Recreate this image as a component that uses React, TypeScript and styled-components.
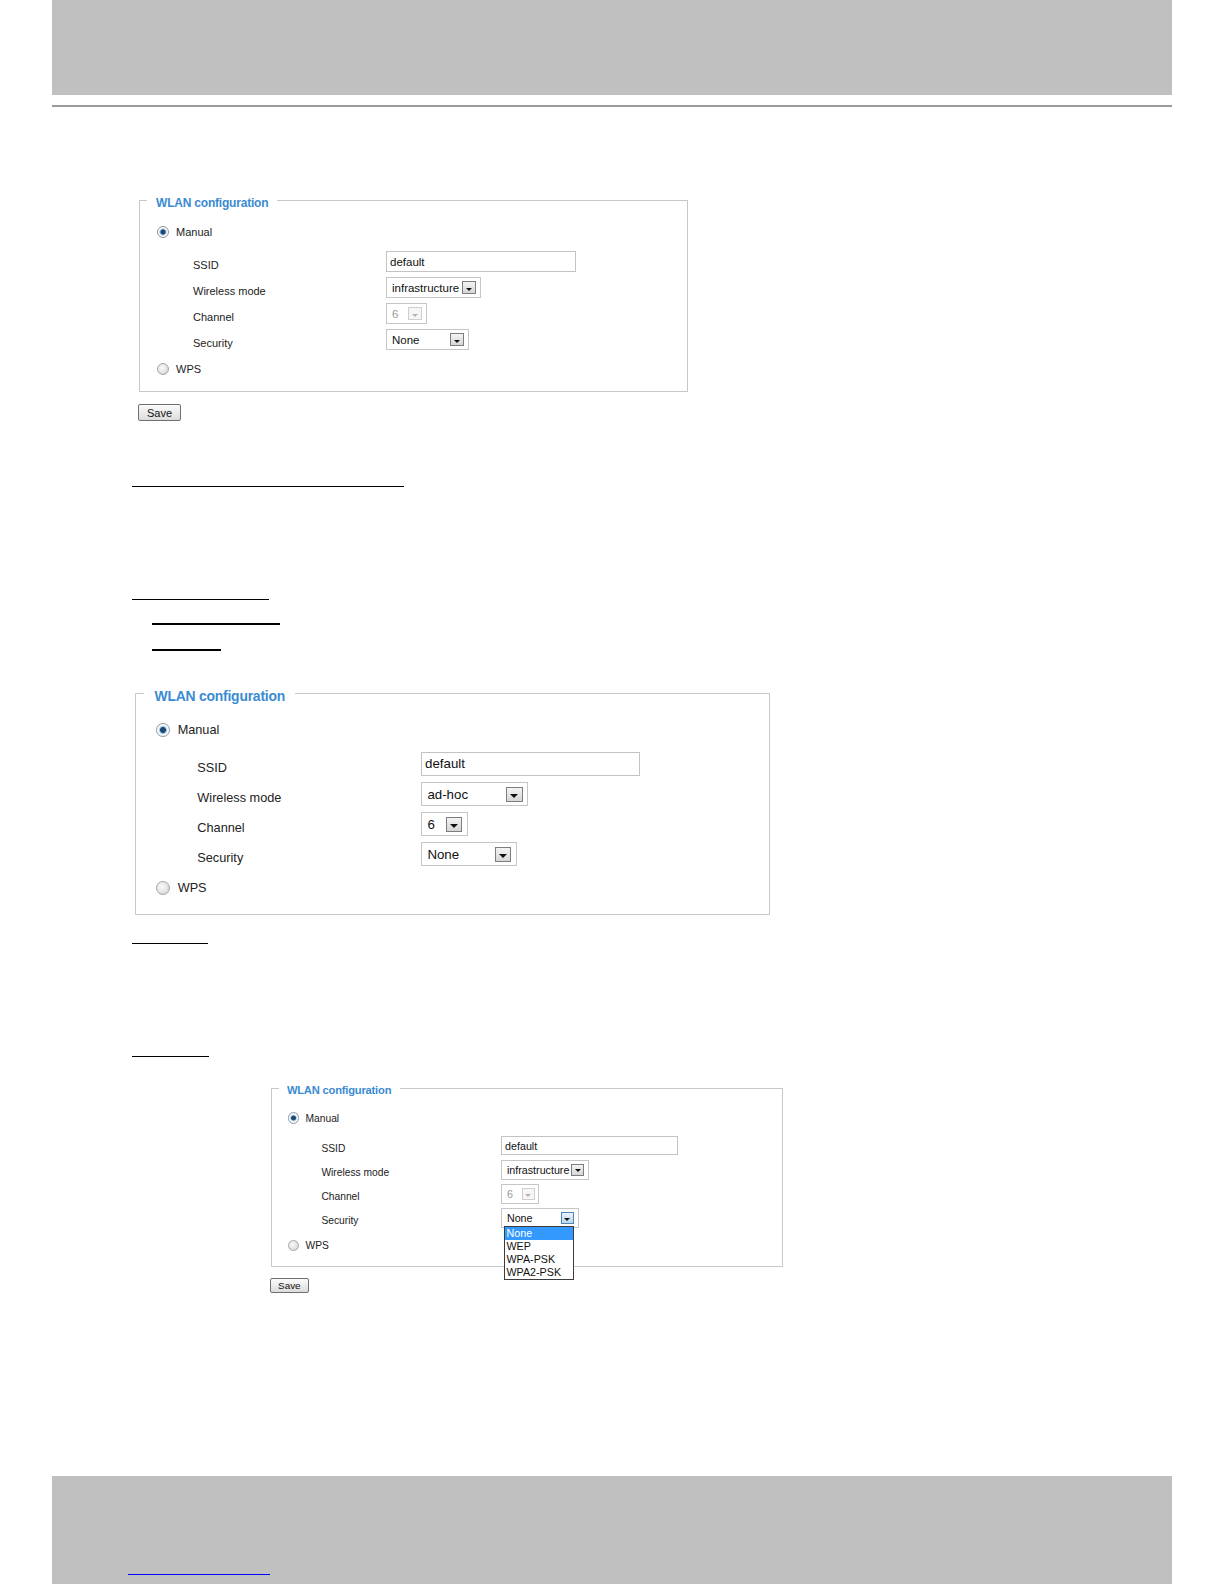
import styled, { createGlobalStyle } from "styled-components";

const GlobalStyle = createGlobalStyle`
  html, body {
    margin: 0;
    padding: 0;
    background: #fff;
  }
  body {
    font-family: "Liberation Sans", Arial, sans-serif;
    color: #222;
  }
`;

const Page = styled.div`
  width: 1224px;
  min-height: 1584px;
  display: flex;
  flex-direction: column;
`;

const HeaderBand = styled.div`
  margin: 0 52px;
  height: 95px;
  background: #c0c0c0;
`;

const HeaderRule = styled.div`
  margin: 10px 52px 0;
  height: 2px;
  background: #9a9a9a;
`;

const Body = styled.div`
  display: flex;
  flex-direction: column;
  align-items: flex-start;
  padding-left: 132px;
`;

const Underline = styled.div<{ $w: number; $top: number; $indent?: number; $thick?: number }>`
  margin-top: ${(p) => p.$top}px;
  margin-left: ${(p) => p.$indent ?? 0}px;
  width: ${(p) => p.$w}px;
  height: ${(p) => p.$thick ?? 1}px;
  background: #000;
`;

const Panel = styled.div<{ $s: number; $top: number; $left: number }>`
  position: relative;
  box-sizing: border-box;
  margin-top: ${(p) => p.$top}px;
  margin-left: ${(p) => p.$left}px;
  width: ${(p) => 549 * p.$s}px;
  height: ${(p) => 192 * p.$s}px;
  border: 1px solid #c8c8c8;
  padding: ${(p) => 24 * p.$s}px 0 0 ${(p) => 17 * p.$s}px;
  font-size: ${(p) => 11 * p.$s}px;
`;

const Legend = styled.div<{ $s: number }>`
  position: absolute;
  top: ${(p) => -4.5 * p.$s - 0.5}px;
  left: ${(p) => 7 * p.$s}px;
  padding: 0 ${(p) => 9 * p.$s}px;
  background: #fff;
  color: #3a8bd2;
  font-weight: bold;
  font-size: ${(p) => 12 * p.$s}px;
  line-height: ${(p) => 15 * p.$s}px;
  letter-spacing: -0.2px;
`;

const RadioRow = styled.div<{ $s: number }>`
  display: flex;
  align-items: center;
  height: ${(p) => 14 * p.$s}px;
  gap: ${(p) => 7 * p.$s}px;
`;

const Radio = styled.span<{ $s: number; $on?: boolean }>`
  box-sizing: border-box;
  width: ${(p) => 12 * p.$s}px;
  height: ${(p) => 12 * p.$s}px;
  border-radius: 50%;
  border: 1px solid ${(p) => (p.$on ? "#8c9aa6" : "#a6a6a6")};
  background: ${(p) =>
    p.$on
      ? `radial-gradient(circle, #1d4a72 0, #1d4a72 ${2.2 * p.$s}px, #8fb8d8 ${2.8 * p.$s}px, #d7e6f2 ${3.6 * p.$s}px, #fff ${4.2 * p.$s}px, #e2e2e2 100%)`
      : "radial-gradient(circle at 40% 40%, #fafafa 0, #e6e6e6 50%, #c8c8c8 100%)"};
`;

const FormGrid = styled.div<{ $s: number }>`
  display: grid;
  grid-template-columns: ${(p) => 193 * p.$s}px auto;
  grid-auto-rows: ${(p) => 26 * p.$s}px;
  align-items: center;
  margin: ${(p) => 9.5 * p.$s}px 0 ${(p) => 9 * p.$s}px ${(p) => 36 * p.$s}px;
`;

const FieldLabel = styled.div<{ $s: number }>`
  padding-top: ${(p) => 6 * p.$s}px;
`;

const TextInput = styled.div<{ $s: number }>`
  box-sizing: border-box;
  width: ${(p) => 190 * p.$s}px;
  height: ${(p) => 21 * p.$s}px;
  border: 1px solid #c3c3c3;
  padding-left: ${(p) => 3 * p.$s}px;
  display: flex;
  align-items: center;
  font-size: ${(p) => 11.5 * p.$s}px;
  color: #111;
`;

const Select = styled.div<{ $s: number; $w: number; $disabled?: boolean }>`
  position: relative;
  box-sizing: border-box;
  width: ${(p) => p.$w * p.$s}px;
  height: ${(p) => 21 * p.$s}px;
  border: 1px solid #c6c6c6;
  padding: 0 ${(p) => 4 * p.$s}px 0 ${(p) => 5 * p.$s}px;
  display: flex;
  align-items: center;
  justify-content: space-between;
  font-size: ${(p) => 11.5 * p.$s}px;
  color: ${(p) => (p.$disabled ? "#9a9a9a" : "#111")};
`;

const ArrowButton = styled.span<{ $s: number; $disabled?: boolean; $focus?: boolean }>`
  box-sizing: border-box;
  width: ${(p) => 14 * p.$s}px;
  height: ${(p) => 13 * p.$s}px;
  border: 1px solid
    ${(p) => (p.$focus ? "#4f86b8" : p.$disabled ? "#cfcfcf" : "#7d7d7d")};
  background: ${(p) =>
    p.$focus
      ? "linear-gradient(#eaf4fc, #b9d7ef)"
      : p.$disabled
        ? "#f6f6f6"
        : "linear-gradient(#f4f4f4, #d6d6d6)"};
  display: flex;
  align-items: flex-end;
  justify-content: center;
  padding-bottom: ${(p) => 2.5 * p.$s}px;

  &::after {
    content: "";
    border-left: ${(p) => 3.5 * p.$s}px solid transparent;
    border-right: ${(p) => 3.5 * p.$s}px solid transparent;
    border-top: ${(p) => 3.5 * p.$s}px solid
      ${(p) => (p.$disabled ? "#b4b4b4" : "#111")};
  }
`;

const OptionList = styled.div<{ $s: number }>`
  position: absolute;
  z-index: 2;
  top: ${(p) => 17.5 * p.$s}px;
  left: ${(p) => 1.5 * p.$s}px;
  width: ${(p) => 76 * p.$s}px;
  box-sizing: border-box;
  border: 1px solid #3c3c3c;
  background: #fff;
`;

const OptionItem = styled.div<{ $s: number; $active?: boolean }>`
  height: ${(p) => 14 * p.$s}px;
  line-height: ${(p) => 14 * p.$s}px;
  padding-left: ${(p) => 2 * p.$s}px;
  font-size: ${(p) => 11.5 * p.$s}px;
  background: ${(p) => (p.$active ? "#3399ff" : "transparent")};
  color: ${(p) => (p.$active ? "#fff" : "#111")};
`;

const SaveButton = styled.div<{ $s: number; $top: number; $left: number }>`
  box-sizing: border-box;
  margin-top: ${(p) => p.$top}px;
  margin-left: ${(p) => p.$left}px;
  width: ${(p) => 43 * p.$s}px;
  height: ${(p) => 17 * p.$s}px;
  border: 1px solid #6f6f6f;
  border-radius: 2px;
  background: linear-gradient(#fbfbfb, #dcdcdc);
  display: flex;
  align-items: center;
  justify-content: center;
  font-size: ${(p) => 11 * p.$s}px;
  color: #111;
`;

const FooterBand = styled.div`
  margin: auto 52px 0;
  height: 108px;
  box-sizing: border-box;
  background: #c0c0c0;
  display: flex;
  align-items: flex-end;
  padding: 0 0 9px 76px;
`;

const FooterLink = styled.div`
  width: 142px;
  height: 1px;
  background: #0000ff;
`;

interface PanelProps {
  s: number;
  top: number;
  left: number;
  mode: string;
  modeWidth: number;
  channelEnabled?: boolean;
  securityOpen?: boolean;
}

const securityOptions = ["None", "WEP", "WPA-PSK", "WPA2-PSK"];

function WlanPanel({ s, top, left, mode, modeWidth, channelEnabled, securityOpen }: PanelProps) {
  return (
    <Panel $s={s} $top={top} $left={left}>
      <Legend $s={s}>WLAN configuration</Legend>
      <RadioRow $s={s}>
        <Radio $s={s} $on />
        <span>Manual</span>
      </RadioRow>
      <FormGrid $s={s}>
        <FieldLabel $s={s}>SSID</FieldLabel>
        <TextInput $s={s}>default</TextInput>

        <FieldLabel $s={s}>Wireless mode</FieldLabel>
        <Select $s={s} $w={modeWidth}>
          <span>{mode}</span>
          <ArrowButton $s={s} />
        </Select>

        <FieldLabel $s={s}>Channel</FieldLabel>
        <Select $s={s} $w={41} $disabled={!channelEnabled}>
          <span>6</span>
          <ArrowButton $s={s} $disabled={!channelEnabled} />
        </Select>

        <FieldLabel $s={s}>Security</FieldLabel>
        <Select $s={s} $w={83}>
          <span>None</span>
          <ArrowButton $s={s} $focus={securityOpen} />
          {securityOpen && (
            <OptionList $s={s}>
              {securityOptions.map((o, i) => (
                <OptionItem key={o} $s={s} $active={i === 0}>
                  {o}
                </OptionItem>
              ))}
            </OptionList>
          )}
        </Select>
      </FormGrid>
      <RadioRow $s={s}>
        <Radio $s={s} />
        <span>WPS</span>
      </RadioRow>
    </Panel>
  );
}

export default function App() {
  return (
    <>
      <GlobalStyle />
      <Page>
        <HeaderBand />
        <HeaderRule />
        <Body>
          <WlanPanel s={1} top={93} left={7} mode="infrastructure" modeWidth={95} />
          <SaveButton $s={1} $top={12} $left={6}>
            Save
          </SaveButton>

          <Underline $top={65} $w={272} />
          <Underline $top={112} $w={137} />
          <Underline $top={23} $w={128} $indent={20} $thick={2} />
          <Underline $top={24} $w={69} $indent={20} $thick={2} />

          <WlanPanel s={1.157} top={42} left={3} mode="ad-hoc" modeWidth={93} channelEnabled />

          <Underline $top={28} $w={76} />
          <Underline $top={112} $w={77} />

          <WlanPanel s={0.932} top={31} left={139} mode="infrastructure" modeWidth={94} securityOpen />
          <SaveButton $s={0.9} $top={11} $left={138}>
            Save
          </SaveButton>
        </Body>
        <FooterBand>
          <FooterLink />
        </FooterBand>
      </Page>
    </>
  );
}
